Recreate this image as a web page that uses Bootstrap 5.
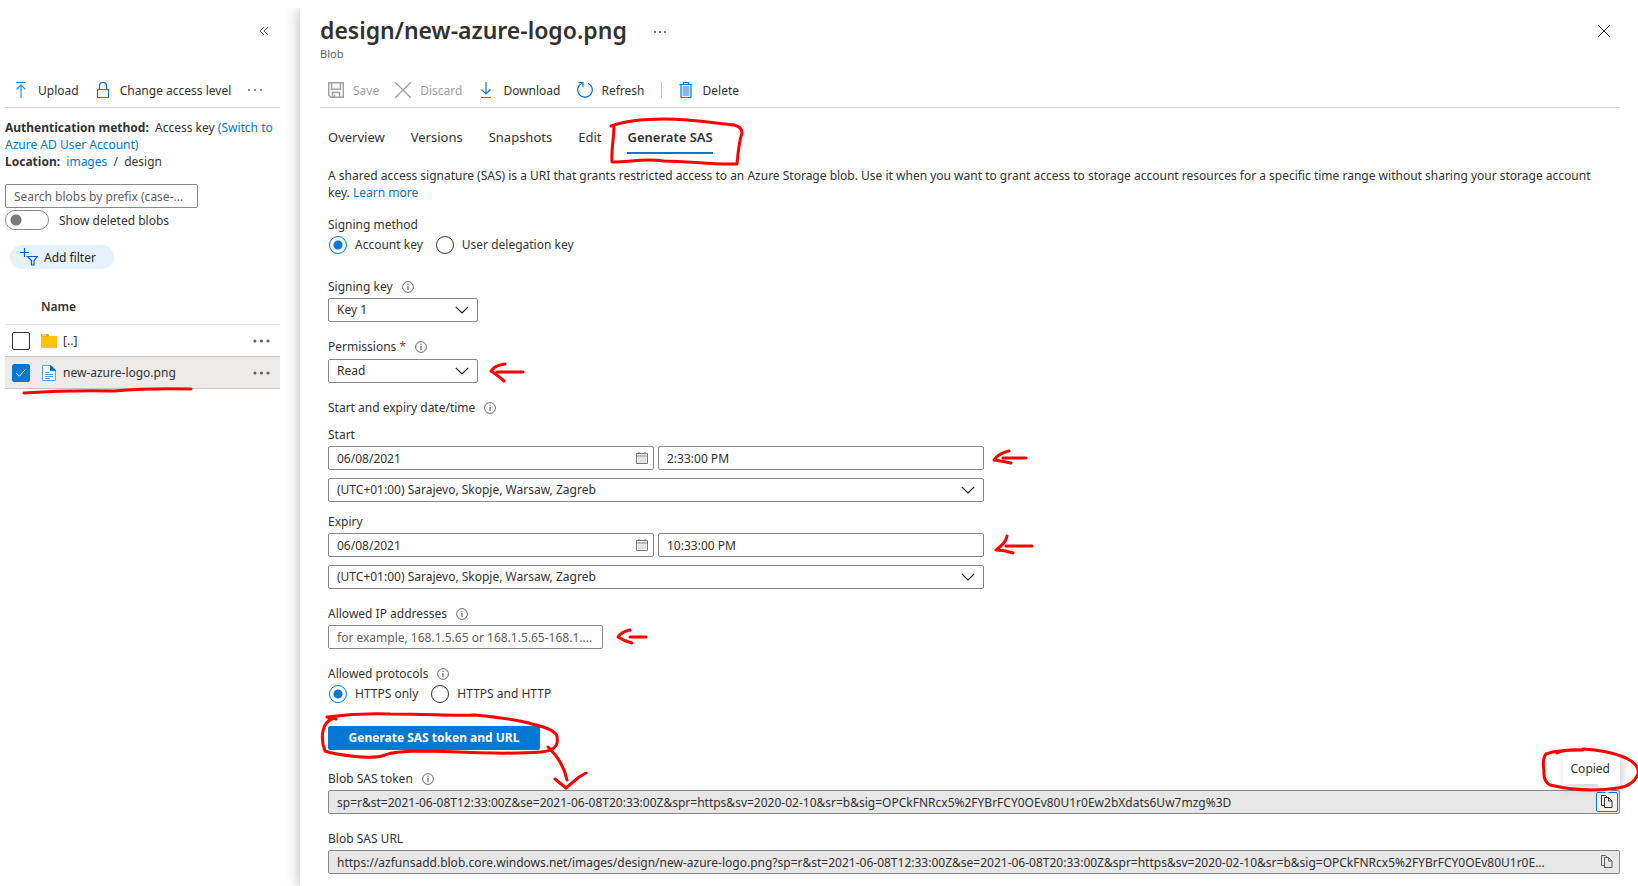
<!DOCTYPE html>
<html lang="en">
<head>
<meta charset="utf-8">
<meta name="viewport" content="width=device-width, initial-scale=1">
<title>design/new-azure-logo.png - Blob</title>
<link href="https://cdn.jsdelivr.net/npm/bootstrap@5.3.0/dist/css/bootstrap.min.css" rel="stylesheet">
<style>
  :root { --az-blue: #0078d4; --az-text: #323130; --az-line: #8a8886; --az-rule: #d6d5d4; }
  body { font: 12px/17px "Noto Sans", "Open Sans", sans-serif; color: var(--az-text); background: #fff; overflow-x: clip; }
  a { color: var(--az-blue); text-decoration: none; }
  svg { flex: none; display: block; }
  .ui-icon { width: 16px; height: 16px; fill: none; stroke: var(--az-blue); }

  .side-pane { width: 300px; flex: none; padding: 8px 20px 0 5px; }
  .blade { flex: 1 1 0; min-width: 0; margin-top: 8px; padding: 0 18px 12px 20px; min-height: calc(100vh - 8px); background: #fff; box-shadow: 0 0 14px rgba(0,0,0,.3); clip-path: inset(0 0 0 -20px); }
  .blade-head { padding-top: 7px; }
  .side-head { height: 53px; padding: 14px 10px 0 0; }
  .blade-title { font-size: 23px; line-height: 30px; font-weight: 600; margin: 0 0 2px; }
  .blade-kind { font-size: 11px; line-height: 14px; color: #605e5c; margin: 0; }
  .ghost { background: none; border: 0; padding: 0; color: inherit; display: block; }

  .cmd-bar { height: 35px; margin-top: 12px; padding: 0 8px; border-bottom: 1px solid var(--az-rule); }
  .cmd-bar button { display: flex; align-items: center; gap: 9px; background: none; border: 0; padding: 0; color: inherit; white-space: nowrap; }
  .cmd-bar button:disabled { color: #a19f9d; }
  .cmd-bar button:disabled .ui-icon { stroke: #a19f9d; }
  .cmd-sep { width: 1px; height: 16px; background: #c8c6c4; }

  .auth-info { margin-top: 11px; }
  .az-field { height: 24px; min-height: 0; padding: 0 8px; font-size: 12px; line-height: 22px; color: var(--az-text); border: 1px solid var(--az-line); border-radius: 2px; background-color: #fff; }
  .az-field::placeholder { color: #605e5c; opacity: 1; }
  .az-drop { background-image: url("data:image/svg+xml,%3Csvg xmlns='http://www.w3.org/2000/svg' viewBox='0 0 14 8'%3E%3Cpath d='M.8.8 7 7 13.2.8' fill='none' stroke='%23201f1e' stroke-width='1.2'/%3E%3C/svg%3E"); background-size: 14px 8px; background-position: right 8px center; }
  .az-readonly { background: #e6e6e6; padding-right: 28px; }
  .search-box { width: 193px; margin-top: 14px; }
  .az-switch { margin: 2px 0 0; padding: 0; min-height: 0; gap: 10px; }
  .form-switch.az-switch .form-check-input { width: 44px; height: 20px; margin: 0; float: none; border: 1px solid var(--az-line); background: #fff radial-gradient(circle at 10px 50%, #7a7a7a 5px, transparent 6px); }
  .pill-filter { height: 24px; margin: 15px 0 0 5px; padding: 0 18px 0 10px; border: 0; border-radius: 12px; background: #e5f1fb; color: #201f1e; gap: 6px; }

  .blob-list { margin-top: 20px; width: 100%; border-collapse: separate; border-spacing: 0; }
  .blob-list th, .blob-list td { height: 32px; padding: 0; vertical-align: middle; border-bottom: 1px solid #c8c6c4; font-weight: 400; }
  .blob-list thead th { height: 36px; font-weight: 600; border-color: #e5e5e5; }
  .blob-list .picked td { background: #edebe9; }
  .blob-list .pick-cell { width: 36px; padding-left: 7px; }
  .blob-list .form-check-input { width: 18px; height: 18px; margin: 0; display: block; border: 1px solid #323130; border-radius: 2px; }
  .blob-list .form-check-input:checked { background-color: var(--az-blue); border-color: var(--az-blue); background-image: url("data:image/svg+xml,%3Csvg xmlns='http://www.w3.org/2000/svg' viewBox='0 0 18 18'%3E%3Cpath d='M3.5 9l3.6 3.6L14 5' fill='none' stroke='%23fff' stroke-width='1.1'/%3E%3C/svg%3E"); }
  .blob-name { display: flex; align-items: center; gap: 6px; }
  .more-cell { width: 27px; }

  .az-tabs { margin-top: 12px; padding-left: 8px; gap: 26px; }
  .az-tabs .nav-link { padding: 8px 0 6px; font-size: 13px; line-height: 18px; color: var(--az-text); border-bottom: 2px solid transparent; }
  .az-tabs .active { font-weight: 600; border-color: var(--az-blue); }
  .sas-form { padding-left: 8px; }
  .intro { margin: 13px 7px 0 0; }
  .cap { display: flex; align-items: center; gap: 9px; font-weight: 400; line-height: 16px; padding-top: 2px; margin: 0; }
  .ui-info { width: 12px; height: 12px; fill: none; stroke: #6a6866; }
  .grp { margin-top: 15px; }
  .grp-14 { margin-top: 14px; }
  .grp-23 { margin-top: 23px; }
  .grp-9 { margin-top: 9px; }
  .grp-10 { margin-top: 10px; }
  .stack { display: flex; flex-direction: column; gap: 3px; }
  .az-radio { display: flex; align-items: center; gap: 8px; height: 18px; line-height: 18px; }
  .az-radio .form-check-input { width: 18px; height: 18px; margin: 0 0 0 1px; border: 1px solid #323130; background-image: none; }
  .az-radio .form-check-input:checked { border-color: var(--az-blue); background: #fff radial-gradient(circle, var(--az-blue) 4px, transparent 5px); }
  .w-short { width: 150px; }
  .w-ip { width: 275px; }
  .date-block { max-width: 656px; }
  .in-icon { position: absolute; right: 5px; top: 5px; }
  .btn-gen { height: 24px; width: 212px; padding: 0; border: 0; border-radius: 2px; background: var(--az-blue); color: #fff; font-size: 12px; line-height: 24px; font-weight: 700; }
  .copy-btn { position: absolute; right: 2px; top: 2px; width: 22px; height: 20px; padding: 0; border: 1px solid transparent; border-radius: 2px; background: none; display: grid; place-items: center; }
  .copy-btn.on { border-color: var(--az-blue); background: #f3f2f1; }
  .copied-tip { position: absolute; right: 0; bottom: 30px; padding: 8px 10px 7px 8px; background: #fff; box-shadow: 3px 4px 10px rgba(0,0,0,.18); }
  .copied-tip::after { content: ""; position: absolute; right: 3px; top: 100%; border: 10px solid transparent; border-top-color: #fff; border-bottom: 0; }

  /* Red pen marks, each anchored to the control it points at */
  .pen { position: absolute; left: 0; top: 0; width: 1px; height: 1px; overflow: visible; pointer-events: none; fill: none; stroke: #f00; stroke-width: 3; stroke-linecap: round; stroke-linejoin: round; z-index: 5; }
</style>
</head>
<body>
<svg width="0" height="0" class="position-absolute" aria-hidden="true">
  <symbol id="i-info" viewBox="0 0 12 12"><circle cx="6" cy="6" r="5.4"/><path d="M6 5v4M6 2.8v1.2" stroke-width="1.2"/></symbol>
  <symbol id="i-cal" viewBox="0 0 14 14"><path d="M1.5 2.5h11v10h-11zM1.5 5h11M4 .8v2.5M10 .8v2.5" stroke="#797775"/><path d="M3.5 7h7M3.5 9h7M3.5 11h7" stroke="#979593" stroke-dasharray="1 1"/></symbol>
  <symbol id="i-copy" viewBox="0 0 12 14"><path d="M3.500 10.500h-3V.5h4l1.500 1.500M3.500 2.500h4l3.500 3.500v6.500H3.500zM7.500 2.500V6h3.500"/></symbol>
  <symbol id="i-dots" viewBox="0 0 18 4"><circle cx="2" cy="2" r="1.600"/><circle cx="8.500" cy="2" r="1.600"/><circle cx="15" cy="2" r="1.600"/></symbol>
</svg>

<div class="d-flex">
  <aside class="side-pane">
    <div class="side-head d-flex justify-content-end align-items-start">
      <button class="ghost" aria-label="Collapse"><svg width="12" height="18" viewBox="0 0 12 18" fill="none" stroke="#605e5c"><path d="M6 5 2 9l4 4M10 5 6 9l4 4"/></svg></button>
    </div>
    <div class="cmd-bar d-flex align-items-center gap-3">
      <button><svg class="ui-icon" viewBox="0 0 16 16"><path d="M3.500 .5h9"/><path d="M8 16V3.500M3.500 7.500 8 3l4.500 4.500" stroke="#3a96dd" stroke-width="1.300"/></svg>Upload</button>
      <button><svg class="ui-icon" viewBox="0 0 16 16"><path d="M2.500 7.500h11v8h-11zM4.500 7.500V4a3.500 3.500 0 0 1 7 0v3.500" stroke-width="1.200"/></svg>Change access level</button>
      <button aria-label="More commands"><svg width="16" height="4" viewBox="0 0 16 4" fill="#605e5c"><circle cx="2" cy="2" r="1"/><circle cx="8" cy="2" r="1"/><circle cx="14" cy="2" r="1"/></svg></button>
    </div>
    <div class="auth-info">
      <div><b>Authentication method:</b>&nbsp; Access key <a href="#">(Switch to Azure AD User Account)</a></div>
      <div><b>Location:</b>&nbsp; <a href="#">images</a>&nbsp; /&nbsp; design</div>
    </div>
    <input class="form-control az-field search-box" type="text" aria-label="Search blobs by prefix" placeholder="Search blobs by prefix (case-...">
    <div class="form-check form-switch az-switch d-flex align-items-center">
      <input class="form-check-input" type="checkbox" role="switch" id="deleted"><label for="deleted">Show deleted blobs</label>
    </div>
    <button class="pill-filter d-flex align-items-center"><svg width="18" height="18" viewBox="0 0 18 18" fill="none" stroke="#015cda" stroke-width="1.200"><path d="M4.500 0v9M0 4.500h9M7.500 8.500h10L14 12.500V17h-2.500v-4.500z"/></svg>Add filter</button>

    <table class="blob-list">
      <thead><tr><th></th><th scope="col">Name</th><th></th></tr></thead>
      <tbody>
        <tr>
          <td class="pick-cell"><input class="form-check-input" type="checkbox" aria-label="Select parent folder"></td>
          <td><div class="blob-name"><svg width="16" height="14" viewBox="0 0 16 14"><path d="M0 0h7l1.500 2H16v12H0z" fill="#ffc20a"/><path d="M0 0h7l1 1.300-1 1.200H0z" fill="#dfa500"/><path d="M1 1h4" stroke="#fff"/></svg>[..]</div></td>
          <td class="more-cell"><button class="ghost" aria-label="More"><svg width="18" height="4" fill="#605e5c"><use href="#i-dots"/></svg></button></td>
        </tr>
        <tr class="picked">
          <td class="pick-cell"><div class="position-relative"><input class="form-check-input" type="checkbox" checked aria-label="Select new-azure-logo.png">
            <svg class="pen" aria-hidden="true"><path d="M12 29q45-3 90-2 35-3 77-2"/></svg></div></td>
          <td><div class="blob-name"><svg width="16" height="16" viewBox="-1 0 16 16"><path d="M.5.5h8.500l4.500 4.500v10.500H.5z" fill="#fff" stroke="#5ea0ef"/><path d="M8.500.5v5h5z" fill="#0f6cbd" stroke="#0f6cbd"/><path d="M3 7.500h4M3 9.500h8M3 11.500h8M3 13.500h5" stroke="#5ea0ef"/></svg>new-azure-logo.png</div></td>
          <td class="more-cell"><button class="ghost" aria-label="More"><svg width="18" height="4" fill="#605e5c"><use href="#i-dots"/></svg></button></td>
        </tr>
      </tbody>
    </table>
  </aside>

  <main class="blade">
    <header class="blade-head d-flex align-items-start">
      <div><h1 class="blade-title">design/new-azure-logo.png</h1><p class="blade-kind">Blob</p></div>
      <button class="ghost ms-4 pt-3" aria-label="More"><svg width="18" height="3" viewBox="0 0 18 3" fill="#323130"><circle cx="4" cy="1" r=".9"/><circle cx="9" cy="1" r=".9"/><circle cx="14" cy="1" r=".9"/></svg></button>
      <button class="ghost ms-auto pt-2 pe-2" aria-label="Close"><svg width="16" height="16" viewBox="0 0 16 16" fill="none" stroke="#201f1e"><path d="m2 2 12 12M14 2 2 14"/></svg></button>
    </header>
    <div class="cmd-bar d-flex align-items-center gap-3">
      <button disabled><svg class="ui-icon" viewBox="0 0 16 16"><path d="M.7.7h14.600v14.600H2.700l-2-2zM3.500.7v6.500h9V.7M4.500 15v-4.500h7V15M6.500 12.500V15" stroke-width="1.400"/></svg>Save</button>
      <button disabled><svg class="ui-icon" viewBox="0 0 16 16"><path d="m0 0 16 16M16 0 0 16" stroke-width="1.300"/></svg>Discard</button>
      <button><svg class="ui-icon" viewBox="0 0 16 16"><path d="M8 0v12M3.500 7.500 8 12l4.500-4.500M3 15.500h10" stroke-width="1.200"/></svg>Download</button>
      <button><svg class="ui-icon" viewBox="0 0 16 16"><path d="M11 1.200A7.300 7.300 0 1 1 5 1.200M1.500.7H6V5" stroke-width="1.200"/></svg>Refresh</button>
      <span class="cmd-sep"></span>
      <button><svg class="ui-icon" viewBox="0 0 16 16"><path d="M5 4.500h6v9H5z" fill="#83b9eb" stroke="#83b9eb"/><path d="M1.500 2.500h13M5.500 2.500v-2h5v2M3 2.500v13h10v-13" stroke-width="1.200"/></svg>Delete</button>
    </div>

    <nav class="nav az-tabs">
      <a class="nav-link" href="#">Overview</a>
      <a class="nav-link" href="#">Versions</a>
      <a class="nav-link" href="#">Snapshots</a>
      <a class="nav-link" href="#">Edit</a>
      <div class="position-relative"><a class="nav-link active" href="#" aria-current="page">Generate SAS</a>
        <svg class="pen" aria-hidden="true"><path d="M-16 6Q3-1 37-1C67-1 92 4 107 5q8 2 8 8-3 8-5 31C83 45 63 41 37 41 16 38 4 42-15 42-16 30-13 18-13 6"/></svg></div>
    </nav>

    <form class="sas-form" onsubmit="return false">
      <p class="intro">A shared access signature (SAS) is a URI that grants restricted access to an Azure Storage blob. Use it when you want to grant access to storage account resources for a specific time range without sharing your storage account key. <a href="#">Learn more</a></p>

      <div class="grp-14 stack" role="radiogroup" aria-label="Signing method">
        <div class="cap">Signing method</div>
        <div class="d-flex gap-2">
          <div class="az-radio me-1"><input class="form-check-input" type="radio" name="sm" id="sm1" checked><label for="sm1">Account key</label></div>
          <div class="az-radio"><input class="form-check-input" type="radio" name="sm" id="sm2"><label for="sm2">User delegation key</label></div>
        </div>
      </div>

      <div class="grp-23 stack">
        <label class="cap" for="skey">Signing key <svg class="ui-info"><use href="#i-info"/></svg></label>
        <select class="form-select az-field az-drop w-short" id="skey"><option>Key 1</option></select>
      </div>

      <div class="grp stack gap-1">
        <label class="cap" for="perm"><span>Permissions <span style="color:#a4262c">*</span></span><svg class="ui-info"><use href="#i-info"/></svg></label>
        <div class="position-relative w-short"><select class="form-select az-field az-drop" id="perm"><option>Read</option></select>
          <svg class="pen" aria-hidden="true"><path d="M169 13h26M177 5q-10 1-14 7 5 3 13 10"/></svg></div>
      </div>

      <div class="grp date-block">
        <div class="cap">Start and expiry date/time <svg class="ui-info"><use href="#i-info"/></svg></div>
        <div class="stack grp-9">
          <label class="cap" for="sdate">Start</label>
          <div class="position-relative d-flex gap-1">
            <div class="position-relative flex-fill"><input class="form-control az-field" id="sdate" value="06/08/2021"><svg class="in-icon" width="14" height="14" fill="none"><use href="#i-cal"/></svg></div>
            <div class="position-relative flex-fill"><input class="form-control az-field" aria-label="Start time" value="2:33:00 PM"></div>
            <div class="position-absolute start-100 top-0"><svg class="pen" aria-hidden="true"><path d="M19 12h23M25 5q-10 2-15 9 8 1 17 3"/></svg></div>
          </div>
        </div>
        <select class="form-select az-field az-drop mt-2" aria-label="Start time zone"><option>(UTC+01:00) Sarajevo, Skopje, Warsaw, Zagreb</option></select>
        <div class="stack grp-10">
          <label class="cap" for="edate">Expiry</label>
          <div class="position-relative d-flex gap-1">
            <div class="position-relative flex-fill"><input class="form-control az-field" id="edate" value="06/08/2021"><svg class="in-icon" width="14" height="14" fill="none"><use href="#i-cal"/></svg></div>
            <div class="position-relative flex-fill"><input class="form-control az-field" aria-label="Expiry time" value="10:33:00 PM"></div>
            <div class="position-absolute start-100 top-0"><svg class="pen" aria-hidden="true"><path d="M22 13h26M23 3q-1 7-11 14 8 0 17 3"/></svg></div>
          </div>
        </div>
        <select class="form-select az-field az-drop mt-2" aria-label="Expiry time zone"><option>(UTC+01:00) Sarajevo, Skopje, Warsaw, Zagreb</option></select>
      </div>

      <div class="grp stack">
        <label class="cap" for="ips">Allowed IP addresses <svg class="ui-info"><use href="#i-info"/></svg></label>
        <div class="position-relative w-ip"><input class="form-control az-field" id="ips" placeholder="for example, 168.1.5.65 or 168.1.5.65-168.1....">
          <svg class="pen" aria-hidden="true"><path d="M302 12h16M302 5q-9 2-12 7 6 4 14 6"/></svg></div>
      </div>

      <div class="grp stack" role="radiogroup" aria-label="Allowed protocols">
        <div class="cap">Allowed protocols <svg class="ui-info"><use href="#i-info"/></svg></div>
        <div class="d-flex gap-2">
          <div class="az-radio me-1"><input class="form-check-input" type="radio" name="ap" id="ap1" checked><label for="ap1">HTTPS only</label></div>
          <div class="az-radio"><input class="form-check-input" type="radio" name="ap" id="ap2"><label for="ap2">HTTPS and HTTP</label></div>
        </div>
      </div>

      <div class="grp-23 position-relative">
        <button class="btn-gen d-block">Generate SAS token and URL</button>
        <svg class="pen" aria-hidden="true"><path d="M8-7-1-9Q30-13 62-12c40 0 60 2 85 1 30 3 45 5 57 9 18 4 25 9 25 13 2 10-5 14-16 15-40 3-80 0-112-1q-35 0-44 4-10 4-34 1Q5 28-3 25q-4-10-2-20Q-3-5 6-8"/><path d="M220 21q15 14 19 33M227 53l11 9 13-11 7-4"/></svg>
      </div>

      <div class="grp stack pt-1">
        <label class="cap" for="tok">Blob SAS token <svg class="ui-info"><use href="#i-info"/></svg></label>
        <div class="position-relative">
          <input class="form-control az-field az-readonly" id="tok" readonly value="sp=r&amp;st=2021-06-08T12:33:00Z&amp;se=2021-06-08T20:33:00Z&amp;spr=https&amp;sv=2020-02-10&amp;sr=b&amp;sig=OPCkFNRcx5%2FYBrFCY0OEv80U1r0Ew2bXdats6Uw7mzg%3D">
          <button class="copy-btn on" type="button" aria-label="Copy token"><svg width="12" height="14" fill="none" stroke="#323130"><use href="#i-copy"/></svg></button>
          <div class="copied-tip" role="tooltip">Copied</div>
          <div class="position-absolute start-100 top-0"><svg class="pen" aria-hidden="true"><path d="M-63-37q8-4 26-3M-37-41q24 1 43 9 14 7 12 16-5 12-20 14-34 5-68-3-7-4-6-14-2-12 2-17 10-4 36-4"/></svg></div>
        </div>
      </div>

      <div class="grp stack">
        <label class="cap" for="url">Blob SAS URL</label>
        <div class="position-relative">
          <input class="form-control az-field az-readonly" id="url" readonly value="https://azfunsadd.blob.core.windows.net/images/design/new-azure-logo.png?sp=r&amp;st=2021-06-08T12:33:00Z&amp;se=2021-06-08T20:33:00Z&amp;spr=https&amp;sv=2020-02-10&amp;sr=b&amp;sig=OPCkFNRcx5%2FYBrFCY0OEv80U1r0E...">
          <button class="copy-btn" type="button" aria-label="Copy URL"><svg width="12" height="14" fill="none" stroke="#605e5c"><use href="#i-copy"/></svg></button>
        </div>
      </div>
    </form>
  </main>
</div>
<script src="https://cdn.jsdelivr.net/npm/bootstrap@5.3.0/dist/js/bootstrap.bundle.min.js"></script>
</body>
</html>
